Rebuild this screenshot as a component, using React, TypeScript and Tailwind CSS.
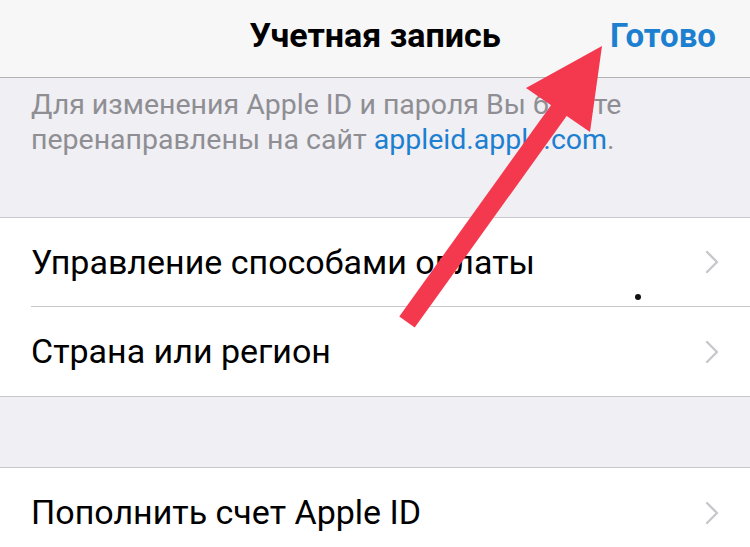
const rows = ["Управление способами оплаты", "Страна или регион"];

function Chevron() {
  return (
    <svg width="14" height="24" viewBox="0 0 14 24" fill="none">
      <polyline
        points="2,2 12,12 2,22"
        stroke="#c7c7cc"
        strokeWidth="2.4"
        strokeLinecap="round"
        strokeLinejoin="round"
      />
    </svg>
  );
}

function Row({ label, last }: { label: string; last?: boolean }) {
  return (
    <div className="flex h-[89px] items-center bg-white pl-[31px]">
      <div
        className={
          "flex h-full flex-1 items-center pr-[31px] " +
          (last ? "" : "border-b border-[#c8c7cc]")
        }
      >
        <span className="flex-1 text-[34px] text-black">{label}</span>
        <Chevron />
      </div>
    </div>
  );
}

export default function App() {
  return (
    <div
      className="relative h-[547px] w-[750px] overflow-hidden bg-[#efeff4]"
      style={{ fontFamily: "Roboto, 'Liberation Sans', sans-serif" }}
    >
      {/* nav bar */}
      <div className="grid h-[78px] grid-cols-[1fr_auto_1fr] items-center border-b border-[#b2b2b2] bg-[#f7f7f7] pb-[6px]">
        <div />
        <div className="text-[34px] font-bold text-black">Учетная запись</div>
        <div className="pr-[34px] text-right text-[33px] font-bold text-[#1d7fd0]">
          Готово
        </div>
      </div>

      <div className="h-[139px] px-[31px] pt-[9px] text-[28.5px] leading-[35px] text-[#8e8e93]">
        Для изменения Apple ID и пароля Вы будете
        <br />
        перенаправлены на сайт <span className="text-[#1d7fd0]">appleid.apple.com</span>.
      </div>

      <div className="border-y border-[#c8c7cc]">
        {rows.map((r, i) => (
          <Row key={r} label={r} last={i === rows.length - 1} />
        ))}
      </div>

      <div className="h-[70px]" />

      <div className="border-t border-[#c8c7cc]">
        <Row label="Пополнить счет Apple ID" last />
      </div>

      {/* red annotation arrow */}
      <svg
        className="pointer-events-none absolute left-0 top-0"
        width="750"
        height="547"
        viewBox="0 0 750 547"
      >
        <line x1="407" y1="322" x2="565" y2="102" stroke="#f4394e" strokeWidth="19" />
        <polygon points="602,46 526,88 590,132" fill="#f4394e" />
        <circle cx="638" cy="297" r="3" fill="#111" />
      </svg>
    </div>
  );
}
